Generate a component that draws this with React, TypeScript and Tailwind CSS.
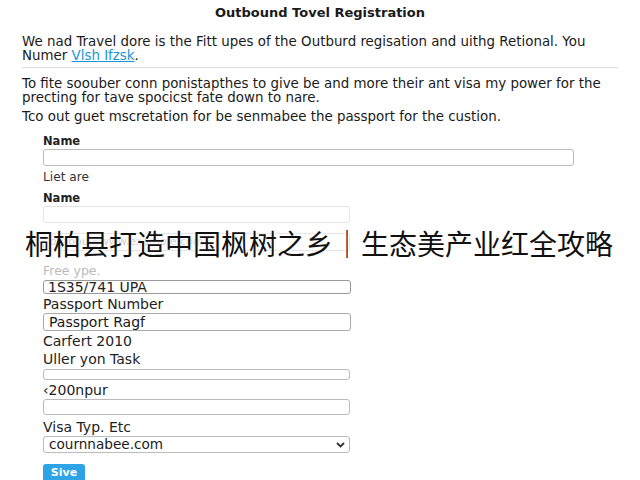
import React from 'react';

const Label: React.FC<{ children: React.ReactNode; className?: string }> = ({ children, className = '' }) => (
  <div className={`leading-[13px] text-[#222] whitespace-nowrap ${className}`}>{children}</div>
);

export default function App() {
  return (
    <div className="relative w-[640px] h-[480px] overflow-hidden bg-white font-['DejaVu_Sans',sans-serif] text-[#1a1a1a]">
      <div className="px-[22px] pt-[4px]">
        <h1 className="text-center text-[13px] font-bold leading-[18px]">Outbound Tovel Registration</h1>
        <p className="mt-[13px] text-[13.4px] leading-[14px]">
          We nad Travel dore is the Fitt upes of the Outburd regisation and uithg Retional. You Numer{' '}
          <a className="text-[#1a95d4] underline">Vlsh Ifzsk</a>.
        </p>
        <hr className="mt-[4px] border-[#ddd]" />
        <p className="mt-[9px] text-[13.4px] leading-[14px]">
          To fite soouber conn ponistapthes to give be and more their ant visa my power for the precting for tave spocicst fate down to nare.
        </p>
        <p className="mt-[5px] text-[13.4px] leading-[14px]">Tco out guet mscretation for be senmabee the passport for the custion.</p>
      </div>

      <div className="pl-[43px] mt-[11px] flex flex-col">
        <Label className="font-bold text-[11.5px]">Name</Label>
        <div className="mt-[1px] w-[531px] h-[17px] rounded-[3px] border border-[#bbb]" />
        <Label className="mt-[5px] text-[#333] text-[12.2px]">Liet are</Label>
        <Label className="mt-[8px] font-bold text-[11.5px]">Name</Label>
        <div className="mt-[1px] w-[307px] h-[17px] rounded-[3px] border border-[#e4e4e4]" />
        <div className="mt-[10px] w-[307px] h-[18px] rounded-[3px] border border-[#e4e4e4] px-[6px] text-[11px] leading-[16px] text-[#ccc]">
          outbou@www.example.com
        </div>
        <Label className="mt-[13px] text-[#bbb] text-[12.5px]">Free ype.</Label>
        <div className="mt-[3px] w-[308px] h-[14px] rounded-[3px] border border-[#999] px-[4px] text-[14px] leading-[12px] text-[#222] whitespace-nowrap">
          1S35/741 UPA
        </div>
        <Label className="mt-[4px] text-[14px]">Passport Number</Label>
        <div className="mt-[2px] w-[308px] h-[18px] rounded-[3px] border border-[#aaa] px-[5px] text-[14px] leading-[16px]">
          Passport Ragf
        </div>
        <Label className="mt-[4px] text-[14px]">Carfert 2010</Label>
        <Label className="mt-[5px] text-[14px]">Uller yon Task</Label>
        <div className="mt-[3px] w-[307px] h-[11px] rounded-[3px] border border-[#bbb]" />
        <Label className="mt-[4px] text-[14px]">‹200npur</Label>
        <div className="mt-[2px] w-[307px] h-[16px] rounded-[3px] border border-[#bbb]" />
        <Label className="mt-[6px] text-[14px]">Visa Typ. Etc</Label>
        <div className="mt-[2px] w-[307px] h-[17px] rounded-[3px] border border-[#bbb] pl-[5px] pr-[4px] flex items-center justify-between text-[13.6px]">
          <span>cournnabee.com</span>
          <svg width="9" height="6" viewBox="0 0 9 6" fill="none" stroke="#333" strokeWidth="1.8">
            <path d="M1 1l3.5 3.5L8 1" />
          </svg>
        </div>
        <div className="mt-[11px] w-[42px] h-[19px] rounded-[3px] bg-[#2ea3e6] text-white text-[11px] font-bold flex items-center justify-center">
          Sive
        </div>
      </div>

      <div className="absolute left-[25px] top-[226px] text-[28px] leading-[34px] text-[#111] whitespace-nowrap font-['Noto_Sans_CJK_SC',sans-serif] [text-shadow:0_0_3px_#fff,0_0_2px_#fff]">
        桐柏县打造中国枫树之乡｜生态美产业红全攻略
      </div>
    </div>
  );
}
